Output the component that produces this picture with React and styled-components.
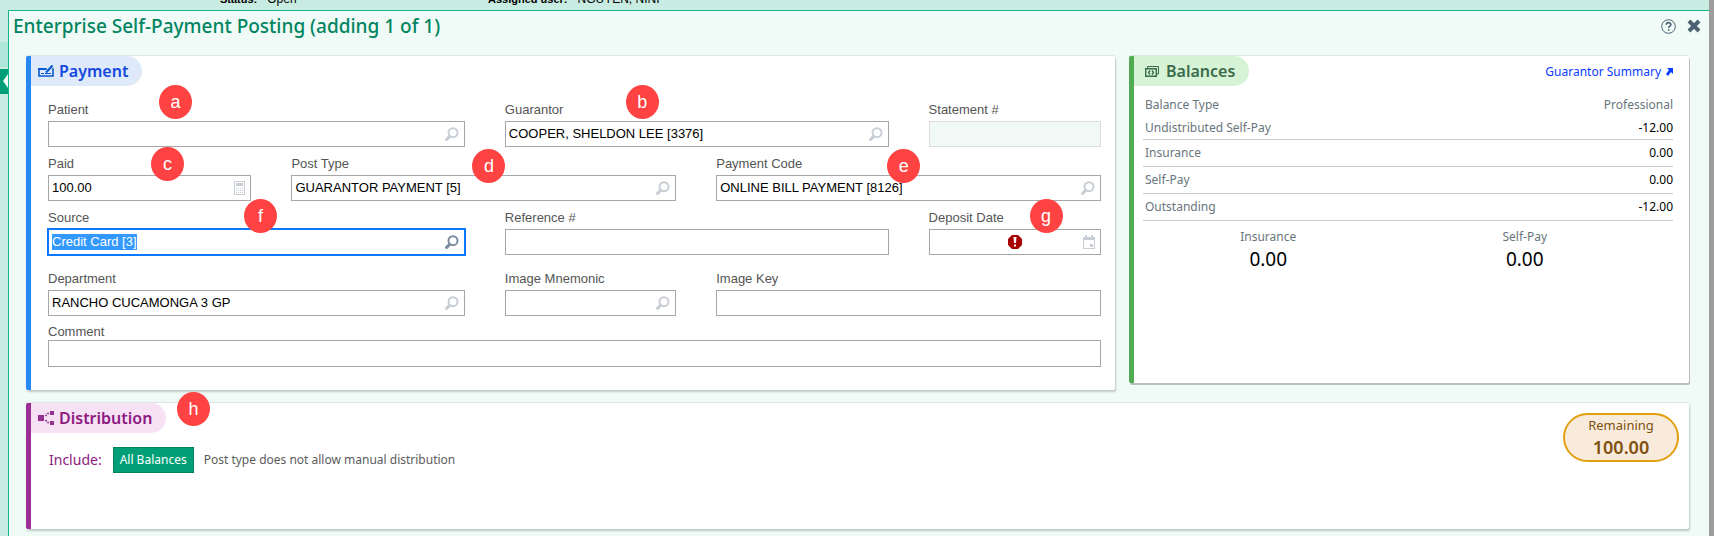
import React, { useEffect, useRef } from "react";
import styled, { createGlobalStyle } from "styled-components";

const form = `"Liberation Sans", Arial, sans-serif`;
const ui = `"Noto Sans", "Segoe UI", sans-serif`;

const GlobalStyle = createGlobalStyle`
  *, *::before, *::after { box-sizing: border-box; }
  body { margin: 0; background: #c8ece1; font: 12px/16px ${ui}; color: #000; }
  h1, h2, p, dl, dd { margin: 0; }
  button { font: inherit; cursor: pointer; }
`;

const Page = styled.div`
  display: flex;
  flex-direction: column;
  min-height: 100vh;
  border-right: 5px solid #9d9d9d;
`;
const Behind = styled.div`
  display: flex;
  align-items: flex-end;
  height: 10px;
  padding: 0 0 4px 220px;
  overflow: hidden;
  font: 12px/14px ${form};
  b { margin-right: 10px; font-size: 11px; }
`;
const Status = styled.span`
  width: 268px;
  flex: none;
`;
const Body = styled.div`
  display: flex;
  flex: 1;
`;
const Rail = styled.div`
  display: flex;
  flex-direction: column;
  gap: 2px;
  width: 8px;
  padding-top: 32px;
`;
const RailItem = styled.div`
  height: 25px;
  background: ${(p) => (p.$active ? "#009f78" : "#afe6da")};
  svg { display: block; margin-left: auto; }
`;
const Dialog = styled.section`
  flex: 1;
  min-width: 0;
  border: solid #10b78b;
  border-width: 1px 0 0 1px;
  background: #f0faf7;
`;
const Header = styled.header`
  display: flex;
  align-items: flex-start;
  justify-content: space-between;
  height: 45px;
  padding: 2px 8px 0 4px;
`;
const Title = styled.h1`
  font: 500 19px/26px ${ui};
  color: #008560;
`;
const Tools = styled.div`
  display: flex;
  gap: 11px;
  padding-top: 6px;
`;
const IconButton = styled.button`
  display: flex;
  padding: 0;
  border: 0;
  background: none;
  color: ${(p) => p.$color || "#c9ced6"};
`;
const Main = styled.main`
  display: grid;
  grid-template-columns: minmax(0, 1089fr) minmax(0, 560fr);
  gap: 13px 14px;
  align-items: start;
  padding: 0 20px 7px 17px;
`;
const Card = styled.section`
  position: relative;
  min-height: ${(p) => p.$height}px;
  grid-column: ${(p) => (p.$wide ? "1 / -1" : "auto")};
  border-left: 5px solid ${(p) => p.$color};
  border-radius: 2px;
  background: #fff;
  box-shadow: ${(p) =>
    p.$hard
      ? "1px 2px 0 #b9bdbb, 0 -1px 0 #dfe3e1"
      : "1px 2px 2px #bfcac6, 0 -1px 1px #dce3e0"};
`;
const CardHead = styled.div`
  display: flex;
  align-items: flex-start;
  justify-content: space-between;
  padding-right: 16px;
`;
const Tab = styled.h2`
  display: flex;
  align-items: center;
  gap: ${(p) => (p.$roomy ? 7 : 5)}px;
  height: 30px;
  padding: 0 14px 0 ${(p) => (p.$roomy ? 11 : 7)}px;
  border-radius: 0 15px 15px 0;
  background: ${(p) => p.$bg};
  color: ${(p) => p.$color};
  font: 600 16px/30px ${ui};
  svg { flex: none; }
`;

const Rows = styled.div`
  display: flex;
  flex-direction: column;
  padding: 13px 14px 23px 17px;
`;
const FieldGrid = styled.div`
  display: grid;
  grid-template-columns:
    minmax(0, 203fr) minmax(0, 173fr) minmax(0, 171fr)
    minmax(0, 172fr) minmax(0, 172fr);
  gap: 6px 40px;
  & + & { margin-top: 13px; }
`;
const FieldBox = styled.div`
  position: relative;
  grid-column: span ${(p) => p.$span || 1};
  display: flex;
  flex-direction: column;
`;
const Label = styled.label`
  height: 22px;
  font: 13px/22px ${form};
  color: #555;
`;
const Control = styled.div`
  display: flex;
  align-items: center;
  height: 26px;
  padding-right: 5px;
  border: 1px solid ${(p) => (p.$focus ? "#0a78ff" : p.$off ? "#dcdcdc" : "#a6a6a6")};
  box-shadow: ${(p) => (p.$focus ? "0 0 0 1px #0a78ff" : "none")};
  background: ${(p) => (p.$off ? "#f0f9f6" : "#fff")};
`;
const Input = styled.input`
  flex: 1;
  min-width: 0;
  height: 16px;
  padding: 0 3px;
  border: 0;
  outline: 0;
  background: none;
  color: #000;
  font: 13px/16px ${form};
  &::selection { background: #3399ff; color: #fff; }
`;
const CommentBox = styled.div`
  display: flex;
  flex-direction: column;
  margin-top: 8px;
`;
const CommentLabel = styled(Label)`
  height: 16px;
  line-height: 16px;
`;
const CommentInput = styled(Input)`
  flex: none;
  height: 27px;
  border: 1px solid #a6a6a6;
`;
const Marker = styled.span`
  position: absolute;
  z-index: 2;
  left: ${(p) => p.$x}px;
  top: ${(p) => p.$y}px;
  width: 33px;
  height: 34px;
  border-radius: 50%;
  background: #ff4343;
  color: #fff;
  font: 18px/34px ${form};
  text-align: center;
`;
const Alert = styled.span`
  position: absolute;
  left: 50%;
  bottom: 6px;
  width: 14px;
  height: 14px;
  margin-left: -7px;
`;

const SummaryLink = styled.a`
  display: flex;
  align-items: center;
  gap: 5px;
  margin-top: 8px;
  color: #0a3cff;
  text-decoration: none;
`;
const BalanceTable = styled.table`
  width: calc(100% - 25px);
  margin: 7px 16px 0 9px;
  border-collapse: collapse;
  color: #68757c;
  th { font-weight: 400; text-align: left; padding: 0 0 0 2px; }
  td, th:last-child { text-align: right; padding: 0; }
  td { color: #000; }
  thead th { height: 24px; }
  tbody tr { height: 27px; border-bottom: 1px solid #cbcbcb; }
  tbody tr:first-child { height: 22px; }
`;
const Totals = styled.dl`
  display: grid;
  grid-template-columns: 1fr 1fr;
  margin: 8px 36px 0 6px;
  text-align: center;
  dt { color: #68757c; }
  dd { font-size: 19px; line-height: 28px; }
`;

const Include = styled.div`
  display: flex;
  align-items: center;
  padding: 14px 0 0 18px;
`;
const IncludeLabel = styled.span`
  color: #8d1a80;
  font-size: 14px;
  line-height: 20px;
`;
const BalanceButton = styled.button`
  height: 26px;
  margin: 0 10px 0 11px;
  padding: 0 6px;
  border: 1px solid #00805e;
  background: #009f78;
  color: #fff;
`;
const Note = styled.p`
  color: #5c5c5c;
`;
const Remaining = styled.div`
  display: flex;
  flex-direction: column;
  align-items: center;
  position: absolute;
  right: 10px;
  top: 10px;
  width: 116px;
  height: 49px;
  padding-top: 1px;
  border: 2px solid #e0a010;
  border-radius: 25px;
  background: #f9ebdc;
  color: #80500f;
  font-size: 13px;
  line-height: 18px;
  strong { font-size: 18px; font-weight: 600; line-height: 26px; }
`;

const Search = () => (
  <svg width="14" height="14" viewBox="0 0 14 14" fill="none" stroke="currentColor">
    <circle cx="8" cy="5.7" r="4.5" strokeWidth="2" />
    <path d="M4.6 9.4 1.6 12.4" strokeWidth="3" strokeLinecap="round" />
  </svg>
);
const Calculator = () => (
  <svg width="11" height="14" viewBox="0 0 11 14" fill="currentColor">
    <path d="M0 0H11V14H0ZM1 1V13H10V1Z" fillRule="evenodd" />
    <path d="M2 2h7v3H2zM2 7h1v1H2zM4 7h1v1H4zM6 7h1v1H6zM8 7h1v1H8zM2 9h1v1H2zM4 9h1v1H4zM6 9h1v1H6zM8 9h1v1H8zM2 11h1v1H2zM4 11h1v1H4zM6 11h1v1H6zM8 11h1v1H8z" />
  </svg>
);
const Calendar = () => (
  <svg width="12" height="14" viewBox="0 0 12 14" fill="currentColor">
    <path d="M2 0h2v2h4V0h2v2h2v12H0V2h2zM1 5v8h10V5z" fillRule="evenodd" />
    <path d="M7 9h3v3H7z" />
  </svg>
);

const icons = {
  search: ["Search", Search],
  calc: ["Calculator", Calculator],
  date: ["Calendar", Calendar],
};

function Field({ id, label, span, value, icon, mark, x, y, selected, off, alert }) {
  const ref = useRef(null);
  useEffect(() => {
    if (selected) {
      ref.current.focus();
      ref.current.select();
    }
  }, [selected]);
  const [name, Icon] = icons[icon] || [];
  return (
    <FieldBox $span={span}>
      <Label htmlFor={id}>{label}</Label>
      <Control $focus={selected} $off={off}>
        <Input id={id} ref={ref} defaultValue={value} disabled={off} spellCheck={false} autoComplete="off" />
        {Icon && (
          <IconButton type="button" aria-label={`${name} ${label}`} $color={selected ? "#7c8c9e" : undefined}>
            <Icon />
          </IconButton>
        )}
      </Control>
      {alert && (
        <Alert role="img" aria-label="Required">
          <svg width="14" height="14" viewBox="0 0 14 14">
            <path d="M4 0h6l4 4v6l-4 4H4L0 10V4z" fill="#a80000" />
            <path d="M5.500 2h3L8 8H6zM6 9.500h2v2H6z" fill="#fff" />
          </svg>
        </Alert>
      )}
      {mark && <Marker $x={x} $y={y}>{mark}</Marker>}
    </FieldBox>
  );
}

const balances = [
  ["Undistributed Self-Pay", "-12.00"],
  ["Insurance", "0.00"],
  ["Self-Pay", "0.00"],
  ["Outstanding", "-12.00"],
];

export default function App() {
  return (
    <Page>
      <GlobalStyle />
      <Behind>
        <Status><b>Status:</b>Open</Status>
        <span><b>Assigned user:</b>NGUYEN, NINI</span>
      </Behind>
      <Body>
        <Rail>
          <RailItem />
          <RailItem $active>
            <svg width="5" height="25" viewBox="0 0 5 25"><path d="M5 5v14L0 12z" fill="#f0faf7" /></svg>
          </RailItem>
        </Rail>
        <Dialog>
          <Header>
            <Title>Enterprise Self-Payment Posting (adding 1 of 1)</Title>
            <Tools>
              <IconButton type="button" aria-label="Help" $color="#4a6274">
                <svg width="15" height="15" viewBox="0 0 15 15" fill="none" stroke="currentColor">
                  <circle cx="7.5" cy="7.5" r="6.8" />
                  <path d="M5.300 5.800c0-3 4.600-2.800 4.600-.3 0 1.700-2.200 1.700-2.200 3.400M7.700 10.200v1.600" strokeWidth="1.600" />
                </svg>
              </IconButton>
              <IconButton type="button" aria-label="Close" $color="#4a6274">
                <svg width="14" height="14" viewBox="0 0 14 14" fill="none" stroke="currentColor">
                  <path d="M2 2l10 10M12 2 2 12" strokeWidth="4" />
                </svg>
              </IconButton>
            </Tools>
          </Header>
          <Main>
            <Card $color="#2688f0" $height={334}>
              <CardHead>
                <Tab $bg="#deeaf9" $color="#1448e0">
                  <svg width="16" height="12" viewBox="0 0 16 12" fill="none" stroke="#0a5bd0">
                    <path d="M9 4H1v7h14V4h-1" strokeWidth="1.600" />
                    <path d="M0 4h8" strokeWidth="2" />
                    <path d="M14.500.5 9.500 6 8 7.500" strokeWidth="2.200" />
                    <path d="M3 8.500h3M7 8.500h6" />
                  </svg>
                  Payment
                </Tab>
              </CardHead>
              <Rows>
                <FieldGrid>
                  <Field id="patient" label="Patient" span={2} icon="search" mark="a" x={111} y={-14} />
                  <Field id="guarantor" label="Guarantor" span={2} value="COOPER, SHELDON LEE [3376]" icon="search" mark="b" x={121} y={-14} />
                  <Field id="statement" label="Statement #" off />
                  <Field id="paid" label="Paid" value="100.00" icon="calc" mark="c" x={103} y={-6} />
                  <Field id="posttype" label="Post Type" span={2} value="GUARANTOR PAYMENT [5]" icon="search" mark="d" x={181} y={-4} />
                  <Field id="paycode" label="Payment Code" span={2} value="ONLINE BILL PAYMENT [8126]" icon="search" mark="e" x={171} y={-4} />
                  <Field id="source" label="Source" span={2} value="Credit Card [3]" icon="search" selected mark="f" x={196} y={-8} />
                  <Field id="reference" label="Reference #" span={2} />
                  <Field id="deposit" label="Deposit Date" icon="date" alert mark="g" x={101} y={-8} />
                </FieldGrid>
                <FieldGrid>
                  <Field id="department" label="Department" span={2} value="RANCHO CUCAMONGA 3 GP" icon="search" />
                  <Field id="mnemonic" label="Image Mnemonic" icon="search" />
                  <Field id="imagekey" label="Image Key" span={2} />
                </FieldGrid>
                <CommentBox>
                  <CommentLabel htmlFor="comment">Comment</CommentLabel>
                  <CommentInput id="comment" />
                </CommentBox>
              </Rows>
            </Card>
            <Card $color="#50ab52" $height={327} $hard>
              <CardHead>
                <Tab $bg="#d7f3d5" $color="#3b6b4c" $roomy>
                  <svg width="14" height="11" viewBox="0 0 14 11" fill="none" stroke="currentColor">
                    <path d="M2.500 2V.5h11v7.500H12" />
                    <path d="M.7 2.700h10.600v7.600H.7z" strokeWidth="1.400" />
                    <path d="M5 4.500 3.500 6.500 5 8.500M7 4.500 8.500 6.500 7 8.500" strokeWidth="1.400" />
                  </svg>
                  Balances
                </Tab>
                <SummaryLink href="#guarantor-summary">
                  Guarantor Summary
                  <svg width="7" height="8" viewBox="0 0 7 8"><path d="M1 0h6v6L5 4 2 8 0 6l3-4z" fill="currentColor" /></svg>
                </SummaryLink>
              </CardHead>
              <BalanceTable>
                <thead>
                  <tr><th scope="col">Balance Type</th><th scope="col">Professional</th></tr>
                </thead>
                <tbody>
                  {balances.map(([k, v]) => (
                    <tr key={k}><th scope="row">{k}</th><td>{v}</td></tr>
                  ))}
                </tbody>
              </BalanceTable>
              <Totals>
                <div><dt>Insurance</dt><dd>0.00</dd></div>
                <div><dt>Self-Pay</dt><dd>0.00</dd></div>
              </Totals>
            </Card>
            <Card $color="#9b2f96" $height={126} $wide>
              <CardHead>
                <Tab $bg="#f6e1f5" $color="#8d1a80">
                  <svg width="16" height="14" viewBox="0 0 16 14" fill="#943090">
                    <path d="M0 4h6v6H0zM12 0h4v4h-4zM12 10h4v4h-4z" />
                    <path d="M11 2.500H9.500L7.500 5M7.500 9l2 2.500H11" fill="none" stroke="#943090" strokeWidth="1.500" strokeDasharray="2 1" />
                  </svg>
                  Distribution
                </Tab>
              </CardHead>
              <Include>
                <IncludeLabel>Include:</IncludeLabel>
                <BalanceButton type="button">All Balances</BalanceButton>
                <Note>Post type does not allow manual distribution</Note>
              </Include>
              <Remaining>Remaining<strong>100.00</strong></Remaining>
              <Marker $x={146} $y={-11}>h</Marker>
            </Card>
          </Main>
        </Dialog>
      </Body>
    </Page>
  );
}
